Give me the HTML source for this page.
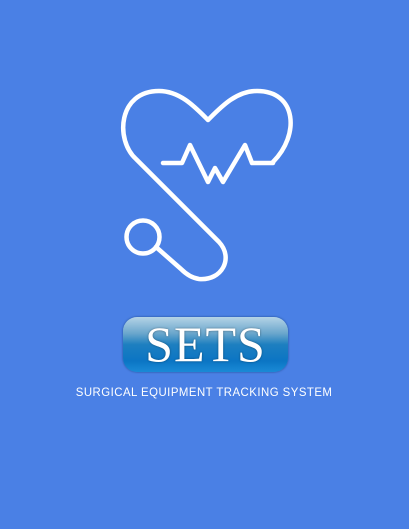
<!DOCTYPE html>
<html><head><meta charset="utf-8"><style>
html,body{margin:0;padding:0;}
body{width:409px;height:529px;background:#4a80e5;position:relative;overflow:hidden;}
svg{position:absolute;left:0;top:0;}
.btn{position:absolute;left:123px;top:317px;width:165px;height:55px;border-radius:14px;
background:linear-gradient(#b5d3e6 0%,#6aa6cc 30%,#1d7fc0 50%,#0b75c4 80%,#1a8ad6 100%);
box-shadow:0 0 2px rgba(0,40,90,.6);}
.btn span{position:absolute;left:0;right:0;top:1px;text-align:center;color:#fff;
font-family:"Liberation Serif",serif;font-size:50px;line-height:52px;letter-spacing:1px;
text-shadow:0 0 2px rgba(0,0,0,.4);}
.sub{position:absolute;left:0;width:409px;top:383px;text-align:center;}
.sub span{display:inline-block;color:#fff;font-family:"Liberation Sans",sans-serif;font-size:12px;letter-spacing:0.5px;transform:scaleX(0.95);}
</style></head><body>
<svg width="409" height="529" viewBox="0 0 409 529">
<g fill="none" stroke="#fff" stroke-width="4.5" stroke-linecap="round" stroke-linejoin="round">
<path d="M273,162 C300,135 297,91 257,91 C236,91 221,107 208,120 C195,107 180,91 159,91 C118,91 115,140 136,159 L219,242 C234,258 222,281 199,279 C192,278 186,274 181,269 L156,247"/>
<circle cx="143" cy="237" r="16.5"/>
<path d="M163,163 L182,163 L190,145 L208,182 L215,168 L223,182 L245,145 L252,163 L273,163"/>
</g>
</svg>
<div class="btn"><span>SETS</span></div>
<div class="sub"><span>SURGICAL EQUIPMENT TRACKING SYSTEM</span></div>
</body></html>
